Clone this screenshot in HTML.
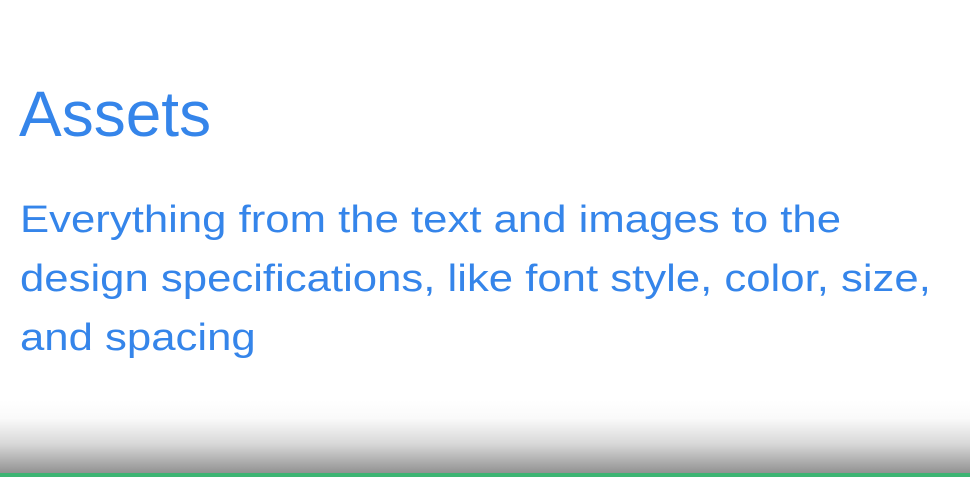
<!DOCTYPE html>
<html><head><style>
html,body{margin:0;padding:0;}
body{width:970px;height:477px;overflow:hidden;background:#fff;position:relative;font-family:"Liberation Sans",sans-serif;color:#3585ea;}
.t{position:absolute;left:19px;top:78px;font-size:64px;line-height:72px;}
.b{position:absolute;left:20px;top:191px;font-size:38px;line-height:59px;width:940px;white-space:nowrap;transform:scaleX(1.15);transform-origin:0 0;}
.g{position:absolute;left:0;top:400px;width:970px;height:73px;background:linear-gradient(#fff 0%,#fafafa 25%,#d8d8d8 60%,#929292 100%);}
.gr{position:absolute;left:0;top:473px;width:970px;height:4px;background:#3db473;}
</style></head><body>
<div class="t">Assets</div>
<div class="b">Everything from the text and images to the<br>design specifications, like font style, color, size,<br>and spacing</div>
<div class="g"></div><div class="gr"></div>
</body></html>
